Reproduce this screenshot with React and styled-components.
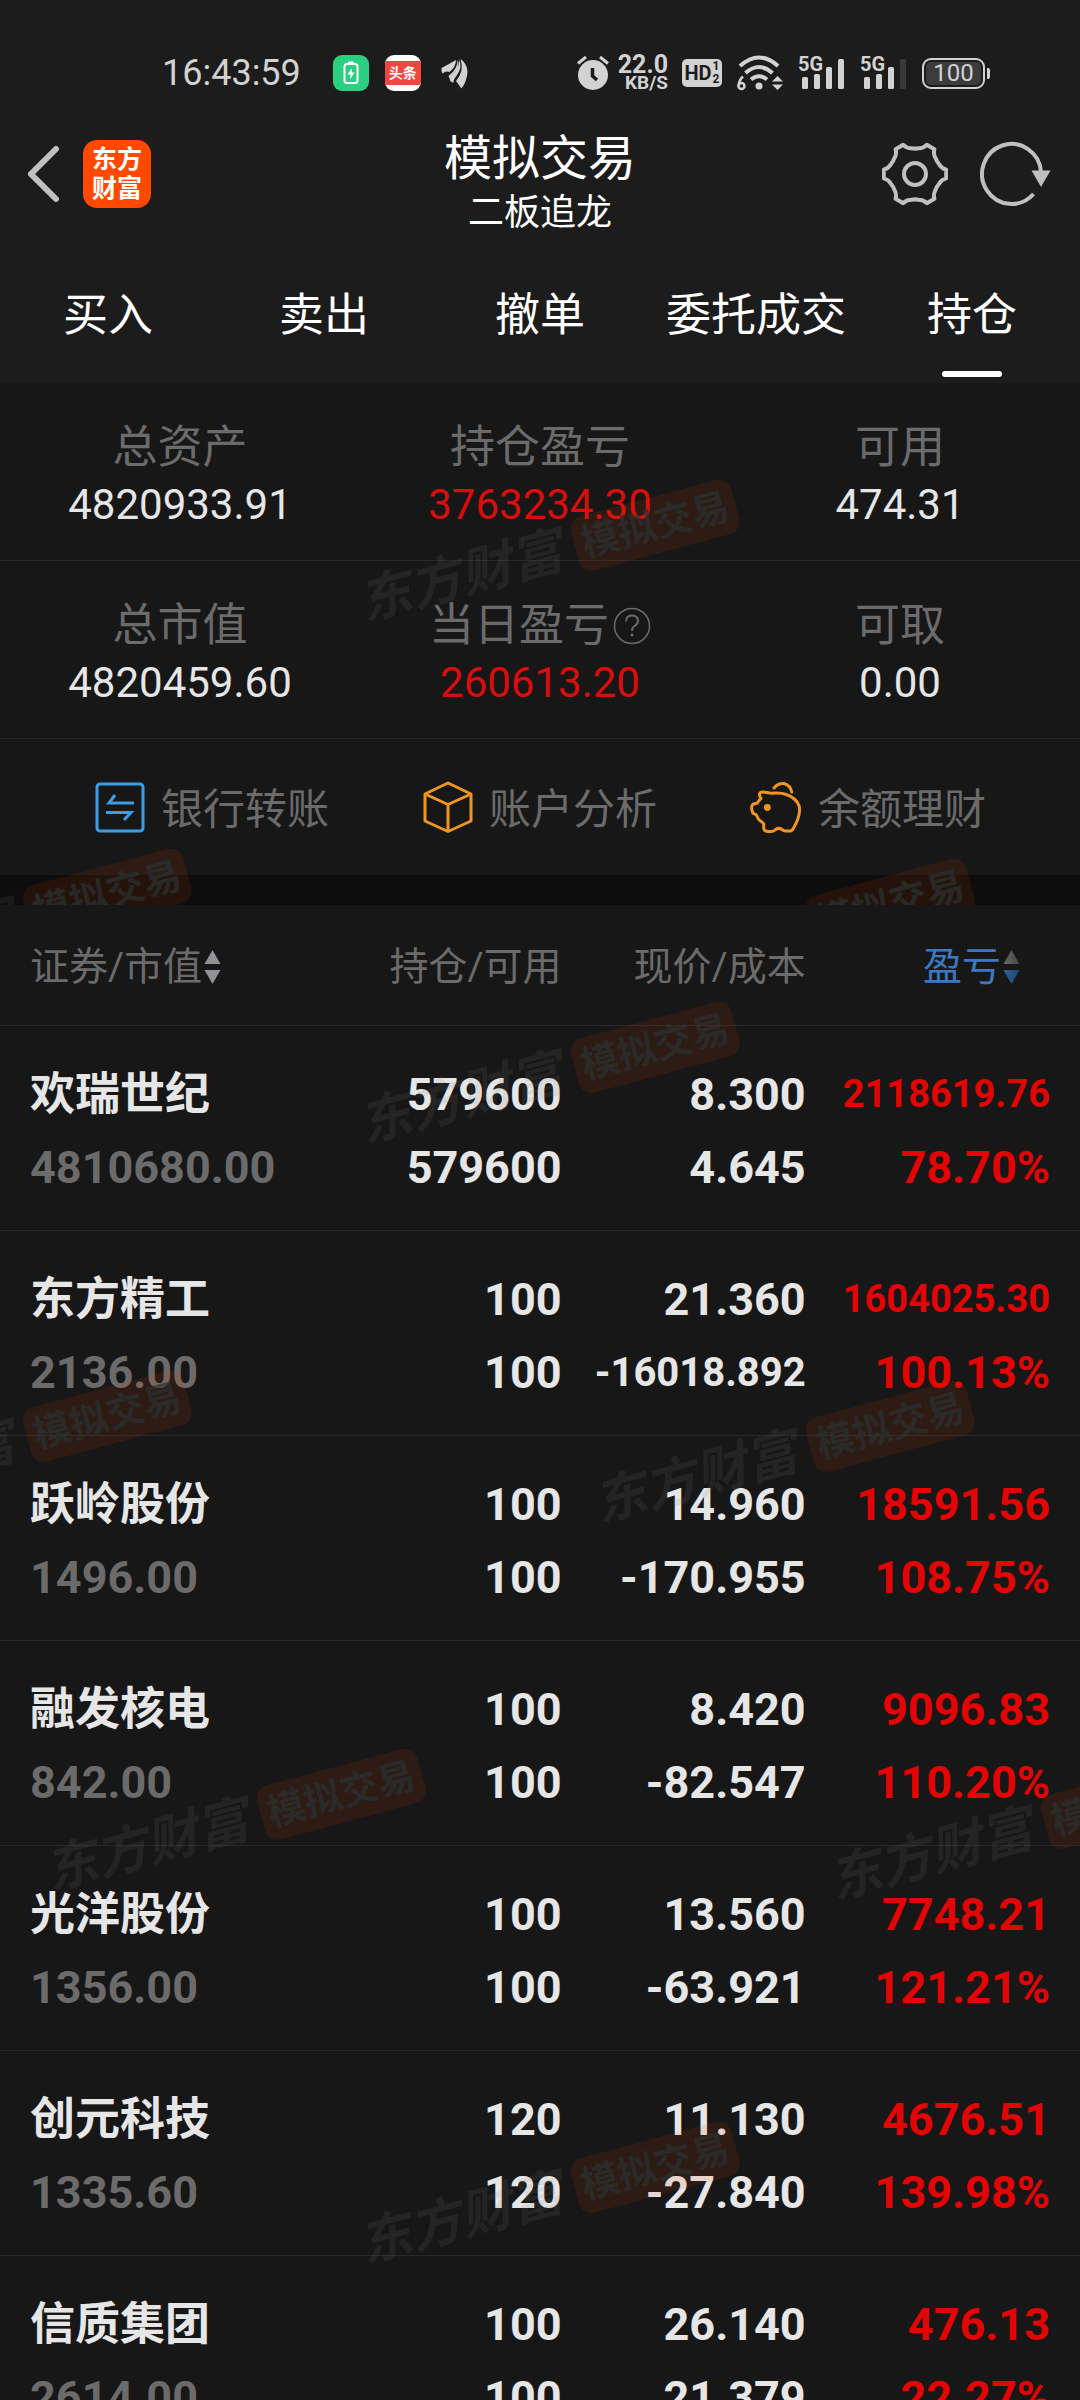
import React from "react";
import styled, { createGlobalStyle, css } from "styled-components";

const color = {
  header: "#1c1c1c",
  panel: "#171717",
  gap: "#0d0d0d",
  line: "#282828",
  label: "#6b6b6b",
  text: "#e6e6e6",
  red: "#e30505",
  icon: "#c0c0c0",
  status: "#d2d2d2",
  blue: "#3b79c4",
  orange: "#f0961f",
};

const GlobalStyle = createGlobalStyle`
  *, *::before, *::after { box-sizing: border-box; }
  body {
    margin: 0;
    background: ${color.panel};
    font-family: Roboto, "Noto Sans CJK SC", sans-serif;
    color: ${color.text};
  }
`;

const resetButton = css`
  border: 0;
  padding: 0;
  margin: 0;
  background: none;
  color: inherit;
  font: inherit;
  cursor: pointer;
`;

const Screen = styled.div`
  display: flex;
  flex-direction: column;
  height: 100vh;
  overflow: hidden;
  background: ${color.panel};
`;

const Header = styled.header`
  flex: none;
  background: ${color.header};
`;

/* ---------- status bar ---------- */

const StatusBar = styled.div`
  display: flex;
  justify-content: space-between;
  align-items: center;
  height: 120px;
  padding: 26px 90px 0 162px;
  color: ${color.status};
`;

const StatusGroup = styled.div`
  display: flex;
  align-items: center;
  gap: ${(p) => p.$gap}px;
`;

const Clock = styled.time`
  font-size: 36px;
  line-height: 40px;
  margin-right: 16px;
`;

const AppBadge = styled.span`
  display: flex;
  align-items: center;
  justify-content: center;
  width: 36px;
  height: 36px;
  border-radius: 9px;
  overflow: hidden;
  background: ${(p) => p.$bg};
`;

const NewsStripe = styled.span`
  width: 36px;
  background: #ef4640;
  color: #fff;
  font-size: 14px;
  line-height: 24px;
  font-weight: 700;
  text-align: center;
`;

const Speed = styled.span`
  display: flex;
  flex-direction: column;
  align-items: flex-end;
  font-weight: 700;
`;

const SpeedNumber = styled.span`
  font-size: 25px;
  line-height: 20px;
`;

const SpeedUnit = styled.span`
  font-size: 19px;
  line-height: 16px;
`;

const HdTag = styled.span`
  display: flex;
  align-items: center;
  justify-content: center;
  gap: 1px;
  width: 40px;
  height: 28px;
  border-radius: 5px;
  background: ${color.status};
  color: ${color.header};
  font-size: 20px;
  line-height: 28px;
  font-weight: 700;
`;

const HdSlots = styled.span`
  display: flex;
  flex-direction: column;
  font-size: 12px;
  line-height: 13px;
`;

const Battery = styled.span`
  display: flex;
  align-items: center;
  gap: 2px;
  &::after {
    content: "";
    width: 3px;
    height: 11px;
    border-radius: 0 2px 2px 0;
    background: ${color.status};
  }
`;

const BatteryBody = styled.span`
  width: 63px;
  height: 31px;
  border: 2px solid ${color.status};
  border-radius: 9px;
  padding: 2px;
`;

const BatteryFill = styled.span`
  display: block;
  border-radius: 5px;
  background: #3c3c3c;
  font-size: 24px;
  line-height: 23px;
  text-align: center;
`;

/* ---------- title bar ---------- */

const TitleBar = styled.div`
  display: grid;
  grid-template-columns: 1fr auto 1fr;
  align-items: start;
  padding: 0 28px;
`;

const TitleSide = styled.div`
  display: flex;
  align-items: center;
  justify-content: ${(p) => (p.$end ? "flex-end" : "flex-start")};
  gap: ${(p) => (p.$end ? 32 : 22)}px;
  height: 108px;
`;

const IconButton = styled.button`
  ${resetButton}
  display: flex;
`;

const Brand = styled.a`
  display: flex;
  flex-direction: column;
  align-items: center;
  justify-content: center;
  width: 68px;
  height: 68px;
  border-radius: 14px;
  background: #ff4800;
  color: #fff;
  font-size: 25px;
  line-height: 29px;
  font-weight: 700;
  text-decoration: none;
`;

const Titles = styled.div`
  padding-top: 11px;
  text-align: center;
  color: #fff;
`;

const Title = styled.h1`
  margin: 0;
  font-size: 48px;
  line-height: 56px;
  font-weight: 400;
`;

const Subtitle = styled.p`
  margin: 0;
  font-size: 36px;
  line-height: 52px;
`;

/* ---------- tabs ---------- */

const Tabs = styled.nav`
  display: grid;
  grid-template-columns: repeat(5, 1fr);
`;

const Tab = styled.button`
  ${resetButton}
  display: flex;
  flex-direction: column;
  align-items: center;
  gap: 28px;
  padding: 50px 0 6px;
  color: #fff;
  font-size: 45px;
  line-height: 54px;
  white-space: nowrap;
  &::after {
    content: "";
    width: 60px;
    height: 6px;
    border-radius: 3px;
    background: ${(p) => (p.$active ? "#fff" : "transparent")};
  }
`;

/* ---------- account summary ---------- */

const Section = styled.section`
  position: relative;
  overflow: hidden;
  flex: ${(p) => (p.$fill ? "1 1 0" : "none")};
  min-height: 0;
`;

const StatRow = styled.dl`
  display: grid;
  grid-template-columns: repeat(3, 1fr);
  margin: 0;
  padding: 36px 0 27px;
  border-bottom: 1px solid ${color.line};
`;

const Stat = styled.div`
  text-align: center;
`;

const StatLabel = styled.dt`
  display: flex;
  align-items: center;
  justify-content: center;
  gap: 4px;
  font-size: 45px;
  line-height: 58px;
  color: ${color.label};
`;

const StatValue = styled.dd`
  margin: 0;
  font-size: 42px;
  line-height: 56px;
  color: ${(p) => (p.$red ? "#d80d0d" : color.text)};
`;

const Actions = styled.div`
  display: grid;
  grid-template-columns: repeat(3, 1fr);
  height: 136px;
  padding: 0 48px;
`;

const Action = styled.button`
  ${resetButton}
  display: flex;
  align-items: center;
  justify-content: center;
  gap: 16px;
  color: ${color.label};
`;

const ActionLabel = styled.span`
  padding-top: 5px;
  font-size: 42px;
  line-height: 58px;
`;

const Gap = styled.div`
  height: 30px;
  background: ${color.gap};
`;

/* ---------- holdings table ---------- */

const Scroller = styled.div`
  height: 100%;
  overflow-y: auto;
  scrollbar-width: none;
`;

const Table = styled.table`
  width: 100%;
  table-layout: fixed;
  border-collapse: separate;
  border-spacing: 0;
`;

const Col = styled.col`
  width: ${(p) => p.$w};
`;

const HeadCell = styled.th`
  height: 121px;
  padding: 4px ${(p) => (p.$last ? 60 : 0)}px 0 ${(p) => (p.$first ? 30 : 0)}px;
  border-bottom: 1px solid ${color.line};
  font-size: 39px;
  line-height: 54px;
  font-weight: 400;
  text-align: ${(p) => (p.$first ? "left" : "right")};
  color: ${(p) => (p.$active ? color.blue : color.label)};
  white-space: nowrap;
`;

const SortButton = styled.button`
  ${resetButton}
  display: inline-flex;
  align-items: center;
  gap: 2px;
`;

const Cell = styled.td`
  padding: 32px ${(p) => (p.$last ? 30 : 0)}px 26px ${(p) => (p.$first ? 30 : 0)}px;
  border-bottom: 1px solid ${color.line};
  text-align: ${(p) => (p.$first ? "left" : "right")};
  font-weight: 700;
  white-space: nowrap;
`;

const tones = { text: color.text, muted: color.label, red: color.red };

const Line = styled.div`
  height: 73px;
  font-size: ${(p) => p.$size || 45}px;
  line-height: 73px;
  color: ${(p) => tones[p.$tone]};
`;

/* ---------- watermark ---------- */

const WatermarkLayer = styled.div`
  position: absolute;
  inset: 0;
  overflow: hidden;
  pointer-events: none;
`;

const Mark = styled.div`
  position: absolute;
  left: ${(p) => p.$x}px;
  top: ${(p) => p.$y}px;
  display: flex;
  align-items: center;
  gap: 14px;
  transform: rotate(-15deg);
  white-space: nowrap;
`;

const MarkName = styled.span`
  font-size: 52px;
  line-height: 58px;
  font-weight: 700;
  font-style: italic;
  color: rgba(120, 120, 120, 0.13);
`;

const MarkTag = styled.span`
  width: 166px;
  border-radius: 13px;
  background: rgba(226, 62, 0, 0.11);
  font-size: 38px;
  line-height: 56px;
  font-weight: 700;
  text-align: center;
  color: rgba(42, 50, 50, 0.7);
`;

const markSpots = [
  [354, 142],
  [-194, 511],
  [589, 521],
  [40, 889],
  [824, 898],
  [354, 1262],
];

function Watermark() {
  return (
    <WatermarkLayer aria-hidden="true">
      {markSpots.map(([x, y]) => (
        <Mark key={`${x}-${y}`} $x={x} $y={y}>
          <MarkName>东方财富</MarkName>
          <MarkTag>模拟交易</MarkTag>
        </Mark>
      ))}
    </WatermarkLayer>
  );
}

/* ---------- icons ---------- */

const polar = (r, deg) => {
  const a = (deg * Math.PI) / 180;
  return `${(33 + r * Math.cos(a)).toFixed(2)} ${(33 + r * Math.sin(a)).toFixed(2)}`;
};

const gearPath =
  [0, 60, 120, 180, 240, 300]
    .map(
      (a, i) =>
        `${i ? "L" : "M"}${polar(31.5, a - 8)} L${polar(31.5, a + 8)} Q${polar(27, a + 12)} ${polar(26, a + 22)} Q${polar(25, a + 30)} ${polar(26, a + 38)} Q${polar(27, a + 48)} ${polar(31.5, a + 52)}`
    )
    .join(" ") + "Z";

const GearIcon = () => (
  <svg width="66" height="66" viewBox="0 0 66 66" fill="none" stroke={color.icon} strokeWidth="4" strokeLinejoin="round">
    <path d={gearPath} />
    <circle cx="33" cy="33" r="11" />
  </svg>
);

const RefreshIcon = () => (
  <svg width="72" height="66" viewBox="0 0 72 66" fill="none" stroke={color.icon} strokeWidth="4">
    <path d="M61 31A29.500 30 0 1 0 53.500 53" />
    <path d="M51.500 29.500H70.500L61 46Z" fill={color.icon} stroke="none" />
  </svg>
);

const BackIcon = () => (
  <svg width="33" height="58" viewBox="0 0 33 58" fill="none" stroke={color.icon} strokeWidth="6" strokeLinecap="round">
    <path d="M28 4L3 29L28 54" strokeLinejoin="miter" />
  </svg>
);

const ChargeIcon = () => (
  <svg width="16" height="24" viewBox="0 0 16 24">
    <rect x="5" y="0.500" width="6" height="3" rx="1" fill="#fff" />
    <rect x="1.500" y="3" width="13" height="19" rx="2.500" fill="none" stroke="#fff" strokeWidth="2" />
    <path d="M9 7L4.500 13.500H7.500L7 18.500L11.500 11.500H8.500Z" fill="#fff" />
  </svg>
);

const WingIcon = () => (
  <svg width="31" height="31" viewBox="-4 0 31 31" fill={color.status}>
    <path d="M0.500 10Q8 6 15 2Q15 9 8.500 14Q5 12.500 1.500 15.500Q0 13 0.500 10Z" />
    <path d="M16.500 1.500Q20 9 12.500 16Q10.500 18 10 24L7.500 18Q17 11 16.500 1.500Z" />
    <path d="M18 1.500Q22 9 16 17Q12.500 21 12 25L9.500 23Q10 18 14 14Q19 8 18 1.500Z" />
    <path d="M19.500 1Q26 5 26.500 14Q26 23 20.500 30.500L15 23Q23.500 13 19.500 1Z" />
  </svg>
);

const AlarmIcon = () => (
  <svg width="32" height="36" viewBox="0 0 32 36">
    <circle cx="16" cy="20" r="15" fill={color.status} />
    <path d="M1 8.500L9 2M31 8.500L23 2" stroke={color.status} strokeWidth="3" />
    <path d="M15.500 13V21L20 25" fill="none" stroke={color.header} strokeWidth="3.500" />
  </svg>
);

const WifiIcon = () => (
  <svg width="48" height="36" viewBox="0 0 48 36" fill="none" stroke={color.status} strokeWidth="4">
    <path d="M4 11Q23 -6 42 11" />
    <path d="M9.500 18Q23 6 36.500 18" />
    <path d="M15 24.500Q23 18 31 24.500" />
    <circle cx="23" cy="31" r="3.500" fill={color.status} stroke="none" />
    <path d="M7 21.500Q3 25 2.500 31" strokeWidth="2.500" />
    <circle cx="5.500" cy="31" r="3" strokeWidth="2.500" />
    <path d="M41.500 21L47 26.500H36ZM41.500 35L36 29.500H47Z" fill={color.status} stroke="none" />
  </svg>
);

const SignalIcon = ({ weak }) => (
  <svg width="48" height="44" viewBox="0 -4 48 44" fill={color.status}>
    <text x="0" y="16" fontFamily="Roboto, sans-serif" fontSize="20" fontWeight="700">
      5G
    </text>
    <rect x="4" y="22" width="6" height="12" rx="1.500" />
    <rect x="16" y="19" width="6" height="15" rx="1.500" />
    <rect x="28" y="12" width="6" height="22" rx="1.500" />
    <rect x="40" y="4" width="6" height="30" rx="1.500" fill={weak ? "#3a3a3a" : color.status} />
  </svg>
);

const HelpIcon = () => (
  <svg width="38" height="38" viewBox="0 0 38 38" fill="none" stroke={color.label} strokeWidth="1.500">
    <circle cx="19" cy="19" r="17.500" />
    <path d="M13 14.500Q13 8.500 19 8.500Q25 8.500 25 14Q25 17 21.500 19Q19 20.500 19 24" strokeWidth="2" />
    <circle cx="19" cy="28" r="1.500" fill={color.label} stroke="none" />
  </svg>
);

const TransferIcon = () => (
  <svg width="50" height="52" viewBox="0 0 50 52" fill="none" stroke="#3a9de6" strokeWidth="3">
    <rect x="2" y="3" width="46" height="47" rx="3" />
    <path d="M39 22H14L20 14M11 31.500H36L29 39" />
  </svg>
);

const BoxIcon = () => (
  <svg width="50" height="52" viewBox="0 0 50 52" fill="none" stroke={color.orange} strokeWidth="3" strokeLinejoin="round">
    <path d="M25 2L48 13V40L25 50.500L2 40V13ZM2 13L25 23.500L48 13M25 23.500V50" />
  </svg>
);

const PigIcon = () => (
  <svg width="52" height="52" viewBox="0 0 52 52" fill="none" stroke={color.orange} strokeWidth="3" strokeLinejoin="round" strokeLinecap="round">
    <path d="M9.700 12.500Q10.500 10.800 13 11L21.300 12.300Q31 11.500 36.300 13.500Q46 17 49 24.500Q51.500 34 43 48Q42 50 39.500 50H35.500Q33.500 50 32 48.500Q28.500 46 25 49Q23.500 50.500 21 50.500H18Q13.500 50 13.700 47V43Q13 41.500 9.700 39.500Q7.500 37.500 7 35Q6 33 3 32.300Q1 28 2 24.500Q3.500 22.300 7 22.300L9 19.700L11 17.300Q9 15 9.700 12.500Z" />
    <path d="M24 7Q28 2 34 2.500Q40.500 4.500 41.700 11" />
    <circle cx="17.300" cy="26.500" r="3.400" fill={color.orange} stroke="none" />
  </svg>
);

const SortIcon = ({ faded }) => (
  <svg width="17" height="36" viewBox="0 0 17 36">
    <defs>
      <linearGradient id="sortUp" x1="0" x2="1">
        <stop offset="0" stopColor="#6a6a6a" />
        <stop offset="1" stopColor="#444444" />
      </linearGradient>
      <linearGradient id="sortDown" x1="0" x2="1">
        <stop offset="0" stopColor="#2f5f9c" />
        <stop offset="1" stopColor="#22446c" />
      </linearGradient>
    </defs>
    <path d="M8.500 1L16.500 15H0.500Z" fill={faded ? "url(#sortUp)" : "#919196"} />
    <path d="M8.500 35L16.500 21H0.500Z" fill={faded ? "url(#sortDown)" : "#919196"} />
  </svg>
);

/* ---------- data ---------- */

const tabs = ["买入", "卖出", "撤单", "委托成交", "持仓"];

const stats = [
  [
    { label: "总资产", value: "4820933.91" },
    { label: "持仓盈亏", value: "3763234.30", red: true },
    { label: "可用", value: "474.31" },
  ],
  [
    { label: "总市值", value: "4820459.60" },
    { label: "当日盈亏", value: "260613.20", red: true, help: true },
    { label: "可取", value: "0.00" },
  ],
];

const actions = [
  { label: "银行转账", Icon: TransferIcon },
  { label: "账户分析", Icon: BoxIcon },
  { label: "余额理财", Icon: PigIcon },
];

const holdings = [
  ["欢瑞世纪", "4810680.00", "579600", "8.300", "4.645", "2118619.76", "78.70%"],
  ["东方精工", "2136.00", "100", "21.360", "-16018.892", "1604025.30", "100.13%"],
  ["跃岭股份", "1496.00", "100", "14.960", "-170.955", "18591.56", "108.75%"],
  ["融发核电", "842.00", "100", "8.420", "-82.547", "9096.83", "110.20%"],
  ["光洋股份", "1356.00", "100", "13.560", "-63.921", "7748.21", "121.21%"],
  ["创元科技", "1335.60", "120", "11.130", "-27.840", "4676.51", "139.98%"],
  ["信质集团", "2614.00", "100", "26.140", "21.379", "476.13", "22.27%"],
];

/* Long figures shrink so that they stay inside their column. */
const Value = ({ tone = "text", longSize = 40, children }) => (
  <Line $tone={tone} $size={children.length > 9 ? longSize : 45}>
    {children}
  </Line>
);

export default function App() {
  return (
    <Screen>
      <GlobalStyle />
      <Header>
        <StatusBar>
          <StatusGroup $gap={16}>
            <Clock>16:43:59</Clock>
            <AppBadge $bg="#2bcf82">
              <ChargeIcon />
            </AppBadge>
            <AppBadge $bg="#fff">
              <NewsStripe>头条</NewsStripe>
            </AppBadge>
            <WingIcon />
          </StatusGroup>
          <StatusGroup $gap={14}>
            <StatusGroup $gap={9}>
              <AlarmIcon />
              <Speed>
                <SpeedNumber>22.0</SpeedNumber>
                <SpeedUnit>KB/S</SpeedUnit>
              </Speed>
            </StatusGroup>
            <HdTag>
              HD
              <HdSlots>
                <span>1</span>
                <span>2</span>
              </HdSlots>
            </HdTag>
            <WifiIcon />
            <SignalIcon />
            <SignalIcon weak />
            <Battery>
              <BatteryBody>
                <BatteryFill>100</BatteryFill>
              </BatteryBody>
            </Battery>
          </StatusGroup>
        </StatusBar>

        <TitleBar>
          <TitleSide>
            <IconButton aria-label="返回">
              <BackIcon />
            </IconButton>
            <Brand href="#home">
              <span>东方</span>
              <span>财富</span>
            </Brand>
          </TitleSide>
          <Titles>
            <Title>模拟交易</Title>
            <Subtitle>二板追龙</Subtitle>
          </Titles>
          <TitleSide $end>
            <IconButton aria-label="设置">
              <GearIcon />
            </IconButton>
            <IconButton aria-label="刷新">
              <RefreshIcon />
            </IconButton>
          </TitleSide>
        </TitleBar>

        <Tabs>
          {tabs.map((name, i) => (
            <Tab key={name} $active={i === 4} aria-current={i === 4 ? "page" : undefined}>
              {name}
            </Tab>
          ))}
        </Tabs>
      </Header>

      <Section>
        {stats.map((row, i) => (
          <StatRow key={i}>
            {row.map((s) => (
              <Stat key={s.label}>
                <StatLabel>
                  {s.label}
                  {s.help && (
                    <IconButton aria-label="说明">
                      <HelpIcon />
                    </IconButton>
                  )}
                </StatLabel>
                <StatValue $red={s.red}>{s.value}</StatValue>
              </Stat>
            ))}
          </StatRow>
        ))}
        <Actions>
          {actions.map(({ label, Icon }) => (
            <Action key={label}>
              <Icon />
              <ActionLabel>{label}</ActionLabel>
            </Action>
          ))}
        </Actions>
        <Gap />
        <Watermark />
      </Section>

      <Section $fill>
        <Scroller>
          <Table>
            <colgroup>
              <Col $w="34%" />
              <Col $w="18%" />
              <Col $w="22.600%" />
              <Col />
            </colgroup>
            <thead>
              <tr>
                <HeadCell $first>
                  <SortButton>
                    证券/市值
                    <SortIcon />
                  </SortButton>
                </HeadCell>
                <HeadCell>持仓/可用</HeadCell>
                <HeadCell>现价/成本</HeadCell>
                <HeadCell $last $active>
                  <SortButton>
                    盈亏
                    <SortIcon faded />
                  </SortButton>
                </HeadCell>
              </tr>
            </thead>
            <tbody>
              {holdings.map(([name, worth, amount, price, cost, profit, rate]) => (
                <tr key={name}>
                  <Cell $first>
                    <Line $tone="text">{name}</Line>
                    <Line $tone="muted">{worth}</Line>
                  </Cell>
                  <Cell>
                    <Value>{amount}</Value>
                    <Value>{amount}</Value>
                  </Cell>
                  <Cell>
                    <Value>{price}</Value>
                    <Value>{cost}</Value>
                  </Cell>
                  <Cell $last>
                    <Value tone="red" longSize={38}>{profit}</Value>
                    <Value tone="red">{rate}</Value>
                  </Cell>
                </tr>
              ))}
            </tbody>
          </Table>
        </Scroller>
        <Watermark />
      </Section>
    </Screen>
  );
}
